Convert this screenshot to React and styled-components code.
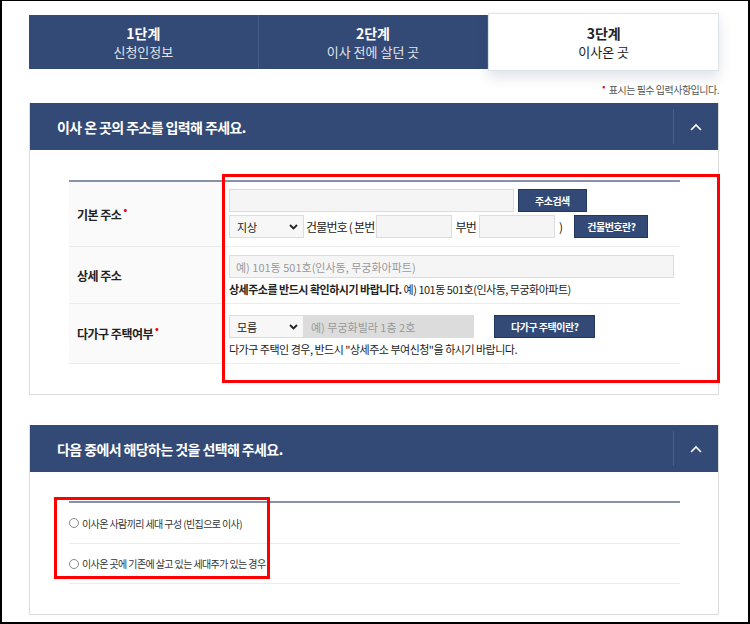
import React from "react";
import styled, { createGlobalStyle } from "styled-components";

const Global = createGlobalStyle`
  html, body { margin: 0; padding: 0; background: #fff; }
  body { font-family: "Noto Sans CJK KR", "Noto Sans", sans-serif; color: #222; }
  * { box-sizing: border-box; }
`;

const Frame = styled.div`
  width: 750px;
  height: 624px;
  border: 2px solid #000;
  border-top-width: 1px;
  padding: 13px 29px 0 27px;
  overflow: hidden;
  position: relative;
`;

const Steps = styled.div`
  display: flex;
  height: 56px;
`;

const Step = styled.div`
  flex: 1;
  display: flex;
  flex-direction: column;
  align-items: center;
  justify-content: center;
  gap: 1px;
  background: ${(p) => (p.$active ? "#fff" : "#334a76")};
  color: ${(p) => (p.$active ? "#222" : "#fff")};
  border-right: 1px solid ${(p) => (p.$active ? "#e2e4ea" : "#475c85")};
  border: ${(p) => (p.$active ? "1px solid #dde1e8" : "")};
  margin-top: ${(p) => (p.$active ? "-1px" : "1px")};
  height: ${(p) => (p.$active ? "58px" : "54px")};
  box-shadow: ${(p) => (p.$active ? "0 6px 12px rgba(40,60,100,0.15)" : "none")};
  b { font-size: 14px; font-weight: 700; line-height: 18px; }
  span { font-size: 13px; line-height: 17px; opacity: ${(p) => (p.$active ? 1 : 0.85)}; }
`;

const Note = styled.div`
  text-align: right;
  font-size: 10px;
  color: #555;
  margin: 10px 0 6px;
  letter-spacing: -0.5px;
  &::before { content: "•"; color: #e00; margin-right: 4px; font-size: 9px; vertical-align: 4px; }
`;

const Panel = styled.section`
  border: 1px solid #dcdcdc;
  border-top: none;
  margin-bottom: 30px;
`;

const PanelHead = styled.div`
  height: 47px;
  background: #334a76;
  color: #fff;
  display: flex;
  align-items: center;
  font-size: 14px;
  font-weight: 700;
  letter-spacing: -0.6px;
  padding-left: 27px;
  h2 { flex: 1; font-size: inherit; margin: 0; }
`;

const Toggle = styled.div`
  width: 45px;
  height: 35px;
  border-left: 1px solid #4a5f88;
  display: flex;
  align-items: center;
  justify-content: center;
`;

const PanelBody = styled.div`
  padding: ${(p) => p.$pad};
  position: relative;
`;

const Table = styled.div`
  margin: 0 38px 0 39px;
  border-top: 2px solid #8791a8;
`;

const Row = styled.div`
  display: flex;
  min-height: ${(p) => p.$h}px;
  border-bottom: 1px solid #ececec;
`;

const Label = styled.div`
  width: 154px;
  background: #fafafa;
  display: flex;
  align-items: center;
  padding-left: 8px;
  font-size: 12px;
  font-weight: 700;
  letter-spacing: -0.5px;
  sup { color: #e00; font-size: 10px; margin-left: 2px; position: relative; top: -6px; }
`;

const Cell = styled.div`
  flex: 1;
  padding: ${(p) => p.$pad || "7px 6px"};
  display: flex;
  flex-direction: column;
  gap: 3px;
  font-size: 12px;
`;

const Line = styled.div`
  display: flex;
  align-items: center;
  gap: ${(p) => p.$gap || 0}px;
`;

const Input = styled.div`
  width: ${(p) => p.$w}px;
  height: 23px;
  border: 1px solid #dcdcdc;
  background: ${(p) => (p.$gray ? "#dcdcdc" : "#f5f5f5")};
  color: #999;
  font-size: 11px;
  padding-left: 6px;
  display: flex;
  align-items: center;
`;

const Select = styled.div`
  width: 75px;
  height: 23px;
  border: 1px solid #dcdcdc;
  background: #f7f7f7;
  font-size: 11px;
  display: flex;
  align-items: center;
  justify-content: space-between;
  padding: 0 5px 0 7px;
`;

const Btn = styled.div`
  height: 23px;
  padding: 0 ${(p) => p.$px || 10}px;
  margin-left: ${(p) => p.$ml || 0}px;
  background: #334a76;
  color: #fff;
  font-size: 10px;
  font-weight: 700;
  display: flex;
  align-items: center;
  border: 1px solid #223760;
  letter-spacing: -0.5px;
`;

const Txt = styled.span`
  font-size: 12px;
  margin: 0 ${(p) => p.$m || 2}px;
  letter-spacing: -0.8px;
`;

const Help = styled.div`
  font-size: 11px;
  letter-spacing: -0.5px;
  b { font-weight: 700; }
`;

const Radio = styled.label`
  display: flex;
  align-items: center;
  gap: 3px;
  font-size: 10px;
  letter-spacing: -0.6px;
  color: #333;
  &::before {
    content: "";
    width: 8px;
    height: 8px;
    border: 1px solid #888;
    border-radius: 50%;
  }
`;

const Mark = styled.div`
  position: absolute;
  border: 3px solid #f00;
  left: ${(p) => p.$x}px;
  top: ${(p) => p.$y}px;
  width: ${(p) => p.$w}px;
  height: ${(p) => p.$h}px;
`;

const Chevron = () => (
  <svg width="12" height="8" viewBox="0 0 12 8">
    <path d="M1 7 L6 2 L11 7" stroke="#fff" strokeWidth="1.6" fill="none" />
  </svg>
);

const Caret = () => (
  <svg width="9" height="6" viewBox="0 0 9 6">
    <path d="M1 1 L4.5 4.5 L8 1" stroke="#222" strokeWidth="1.8" fill="none" />
  </svg>
);

export default function App() {
  return (
    <Frame>
      <Global />
      <Steps>
        <Step><b>1단계</b><span>신청인정보</span></Step>
        <Step><b>2단계</b><span>이사 전에 살던 곳</span></Step>
        <Step $active><b>3단계</b><span>이사온 곳</span></Step>
      </Steps>
      <Note>표시는 필수 입력사항입니다.</Note>

      <Panel>
        <PanelHead><h2>이사 온 곳의 주소를 입력해 주세요.</h2><Toggle><Chevron /></Toggle></PanelHead>
        <PanelBody $pad="30px 0 30px">
          <Table>
            <Row $h={65}>
              <Label>기본 주소<sup>•</sup></Label>
              <Cell>
                <Line $gap={4}><Input $w={285} /><Btn $px={16}>주소검색</Btn></Line>
                <Line>
                  <Select>지상<Caret /></Select>
                  <Txt>건물번호 ( 본번</Txt>
                  <Input $w={76} />
                  <Txt $m={3}>부번</Txt>
                  <Input $w={76} />
                  <Txt $m={4}>)</Txt>
                  <Btn $ml={8} $px={12}>건물번호란?</Btn>
                </Line>
              </Cell>
            </Row>
            <Row $h={57}>
              <Label>상세 주소</Label>
              <Cell $pad="8px 6px 6px">
                <Input $w={445}>예) 101동 501호(인사동, 무궁화아파트)</Input>
                <Help><b>상세주소를 반드시 확인하시기 바랍니다.</b> 예) 101동 501호(인사동, 무궁화아파트)</Help>
              </Cell>
            </Row>
            <Row $h={60}>
              <Label>다가구 주택여부<sup>•</sup></Label>
              <Cell $pad="11px 6px 6px">
                <Line>
                  <Select>모름<Caret /></Select>
                  <Input $w={170} $gray>예) 무궁화빌라 1층 2호</Input>
                  <Btn $ml={20} $px={16}>다가구 주택이란?</Btn>
                </Line>
                <Help>다가구 주택인 경우, 반드시 "상세주소 부여신청"을 하시기 바랍니다.</Help>
              </Cell>
            </Row>
          </Table>
          <Mark $x={192} $y={24} $w={498} $h={209} />
        </PanelBody>
      </Panel>

      <Panel>
        <PanelHead><h2>다음 중에서 해당하는 것을 선택해 주세요.</h2><Toggle><Chevron /></Toggle></PanelHead>
        <PanelBody $pad="29px 0 30px">
          <Table>
            <Row $h={41}><Radio>이사온 사람끼리 세대 구성 (빈집으로 이사)</Radio></Row>
            <Row $h={40}><Radio>이사온 곳에 기존에 살고 있는 세대주가 있는 경우</Radio></Row>
          </Table>
          <Mark $x={24} $y={25} $w={216} $h={82} />
        </PanelBody>
      </Panel>
    </Frame>
  );
}
